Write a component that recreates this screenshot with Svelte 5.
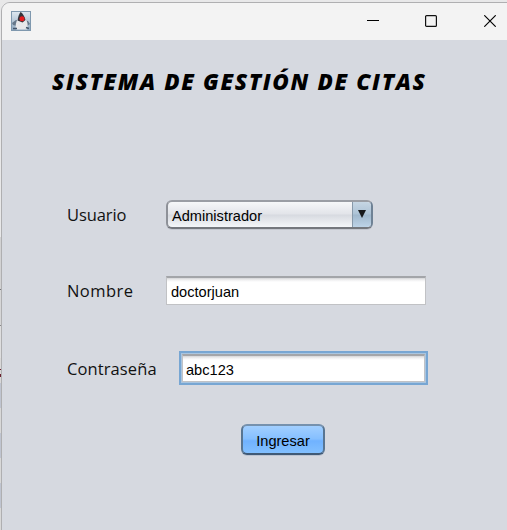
<script>
  let role = 'Administrador';
  let name = 'doctorjuan';
  let password = 'abc123';
  // heights and tints of the window lying behind this one
  const strips = [
    [237, '#e8e8e9'], [52, '#d2d2d3'], [1, '#77777a'], [35, '#d6d6d7'], [1, '#88888b'],
    [32, '#dededf'], [25, '#d9d8d8'], [25, '#bfc4d0'], [25, '#d8d8d8'],
    [25, '#bfc4d0'], [25, '#d8d8d8'], [25, '#bfc4d0'], [22, '#d8d8d8']
  ];
</script>

<div class="desktop">
  <div class="behind">
    {#each strips as [h, c]}
      <div style="height:{h}px;background:{c}"></div>
    {/each}
    <i class="mark"></i>
  </div>
  <main class="window">
    <header>
      <svg class="duke" width="20" height="20" viewBox="0 0 20 20">
        <defs>
          <linearGradient id="sky" x1="0" y1="0" x2="0" y2="1">
            <stop offset="0" stop-color="#dfe8f0" /><stop offset="1" stop-color="#8fa9c0" />
          </linearGradient>
        </defs>
        <rect x=".5" y=".5" width="19" height="19" fill="url(#sky)" stroke="#7f98ae" />
        <path d="M1 12l4-3 3 1-2 5-4-1zM13 9l4 1 2 3-3 2-2-3z" fill="#66788a" />
        <path d="M5 18.5c-1-4 0-8 2-11l8 1c2 3 2 7 1 10z" fill="#e8e8ea" />
        <path d="M9.5 1c2 1 4 4 5 8l-3 2.5-5-2C7 6 8 3 9.5 1z" fill="#34353c" />
        <path d="M2 17.5h4M15 16.5l3 1" stroke="#44566b" stroke-width="1.6" />
        <circle cx="11" cy="7.8" r="2.5" fill="#e51c20" />
      </svg>
      <div class="controls">
        <svg width="12" height="12" viewBox="0 0 12 12"><path d="M0 5.5h12" stroke="#000" /></svg>
        <svg width="12" height="12" viewBox="0 0 12 12"><rect x=".6" y=".6" width="10.8" height="10.8" rx="1" fill="none" stroke="#111" stroke-width="1.2" /></svg>
        <svg width="12" height="12" viewBox="0 0 12 12"><path d="M.3.3l11.4 11.4M11.7.3L.3 11.7" stroke="#000" stroke-width="1.15" /></svg>
      </div>
    </header>
    <h1>SISTEMA DE GESTIÓN DE CITAS</h1>
    <div class="row user">
      <span class="label">Usuario</span>
      <div class="combo"><span>{role}</span>
        <b><svg width="8" height="8" viewBox="0 0 8 8"><path d="M0 0h8L4 8z" fill="#17191b" /></svg></b>
      </div>
    </div>
    <div class="row name">
      <span class="label">Nombre</span>
      <div class="field">{name}</div>
    </div>
    <div class="row pass">
      <span class="label">Contraseña</span>
      <div class="focus"><div class="field">{password}</div></div>
    </div>
    <button>Ingresar</button>
  </main>
</div>

<style>
  * { box-sizing: border-box; }
  .desktop { position: relative; width: 507px; height: 530px; overflow: hidden; background: #e8e8e9; display: flex; padding-top: 2px; }
  .behind { position: absolute; left: 0; top: 0; width: 2px; }
  .mark { position: absolute; left: 0; top: 369px; width: 2px; height: 8px; border: solid #6b2030; border-width: 1px 0 3px; }
  .window { position: relative; flex: none; margin-left: 1px; width: 515px; height: 540px; border: 1px solid #afafb1; border-radius: 9px 0 0 0; background: #d6d9e0; overflow: hidden; display: flex; flex-direction: column; align-items: flex-start; }
  header { width: 505px; height: 37px; background: #f3f3f3; display: flex; justify-content: space-between; padding: 8px 11px 0 9px; flex: none; }
  header svg { display: block; }
  .controls { display: flex; gap: 46px; padding-top: 4px; }
  .controls svg:nth-child(2) { margin-right: 1px; }
  h1 { margin: 24px 0 0 50px; height: 36px; font: italic 800 22.5px/36px "Open Sans", "Noto Sans", sans-serif; letter-spacing: 1.64px; color: #000; white-space: nowrap; }
  .row { display: flex; align-items: center; padding-left: 65px; flex: none; }
  .label { flex: none; font: 16.5px/24px "Open Sans", "Noto Sans", sans-serif; color: #111; white-space: nowrap; }
  .user { margin-top: 100px; height: 29px; }
  .user .label, .name .label { width: 98px; }
  .user .label { letter-spacing: -.1px; }
  .name .label { letter-spacing: .45px; }
  .combo { width: 207px; margin-left: 1px; height: 29px; border: 2px solid #80848b; border-color: #9a9da4 #6f8295 #74777d #8e9198; border-radius: 6px; background: linear-gradient(#f6f7f9, #e2e4e9 48%, #d7dae0 52%, #f4f6f9); display: flex; overflow: hidden; font: 14.6px/28px "Liberation Sans", Arial, sans-serif; color: #000; box-shadow: 0 1px 0 #c3c6ce; }
  .combo span { flex: 1; padding-left: 4px; }
  .combo b { width: 19px; border-left: 1px solid #8799aa; background: linear-gradient(#c6d6e4, #adc3d6 48%, #a0b8cd 52%, #bdd3e7); display: flex; justify-content: center; padding-top: 8px; }
  .field { width: 260px; margin-left: 1px; height: 29px; border: 1px solid #c1c2c5; border-top: 2px solid #a3a5a9; background: linear-gradient(#d4d5d7 0, #f0f0f1 2px, #fff 4px); padding-left: 4px; font: 14.6px/29px "Liberation Sans", Arial, sans-serif; color: #000; }
  .name { margin-top: 47px; height: 29px; }
  .pass { margin-top: 46px; height: 34px; }
  .pass .label { width: 112px; letter-spacing: .1px; padding-top: 1px; }
  .focus { border: 2px solid #77a6d3; width: 249px; height: 34px; background: #a9c5e0; padding: 1px; }
  .focus .field { width: 243px; margin-left: 0; height: 28px; padding-left: 3px; }
  button { margin: 39px 0 0 239px; width: 84px; height: 31px; border: 2px solid #5c7897; border-color: #7691ad #587592 #405a76; border-radius: 6px; background: linear-gradient(#a2cfff, #85bfff 48%, #70b2ff 55%, #82c0ff); font: 14.6px/27px "Liberation Sans", Arial, sans-serif; padding: 2px 0 0; color: #000; box-shadow: 0 1px 0 #bcc3d0; }
</style>
